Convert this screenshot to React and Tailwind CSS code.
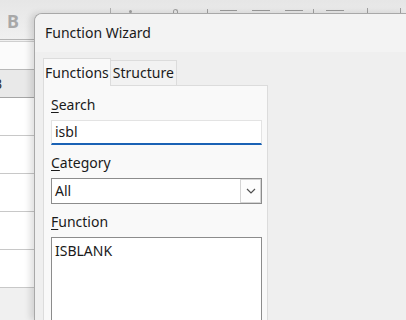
import React from "react";

const font = { fontFamily: '"Noto Sans", "Open Sans", sans-serif' };

function Toolbar() {
  return (
    <div className="h-[40px] bg-gradient-to-b from-[#e6e6e6] to-[#f0f0f0] border-b border-[#b4b4b4] flex items-start pt-[8px] pl-[7px]">
      <span className="mt-[2px] text-[18px] font-bold text-[#a8a8a8] leading-[22px]">B</span>
      {/* icon fragments peeking above the dialog */}
      <span className="ml-[91px] w-px h-[5px] bg-[#b0b0b0]" />
      <span className="ml-[18px] mt-[2px] w-[3px] h-[3px] rounded-full bg-[#a0a0a0]" />
      <span className="ml-[41px] mt-[1px] w-[5px] h-[4px] rounded-t-full border border-b-0 border-[#a0a0a0]" />
      <span className="ml-[29px] mt-[1px] w-px h-[4px] bg-[#a0a0a0]" />
      <span className="ml-[12px] mt-[2px] w-[17px] h-px bg-[#9a9a9a]" />
      <span className="ml-[15px] mt-[2px] w-[18px] h-px bg-[#9a9a9a]" />
      <span className="ml-[15px] mt-[2px] w-[18px] h-px bg-[#9a9a9a]" />
      <span className="ml-[10px] mt-[1px] w-px h-[4px] bg-[#a0a0a0]" />
      <span className="ml-[12px] mt-[2px] w-[18px] h-px bg-[#9a9a9a]" />
      <span className="ml-[23px] w-px h-[5px] bg-[#a0a0a0]" />
      <span className="ml-[32px] w-px h-[5px] bg-[#a0a0a0]" />
    </div>
  );
}

function Sheet() {
  const rows = [0, 1, 2, 3, 4];
  return (
    <div className="w-[34px]">
      <div className="h-[2px] border-b border-[#cfcfcf]" />
      <div className="h-[28px] bg-[#fbfbfb] border-b border-[#b8b8b8]" />
      <div className="h-[28px] bg-[#e9e9e9] border-b border-[#a6a6a6] flex items-center overflow-hidden">
        <span className="ml-[-7px] text-[14px] text-[#333]">B</span>
      </div>
      {rows.map((r) => (
        <div key={r} className="h-[38px] bg-white border-b border-[#c8c8c8]" />
      ))}
    </div>
  );
}

function Label({ first, rest, className = "" }) {
  return (
    <div className={"h-[20px] leading-[20px] text-[14px] text-[#1a1a1a] " + className}>
      <span className="underline underline-offset-[2px] decoration-[1px]">{first}</span>
      {rest}
    </div>
  );
}

function Dialog() {
  return (
    <div className="absolute left-[34px] top-[13px] right-0 bottom-0 overflow-hidden rounded-tl-[8px] border-l border-t border-[#a8a8a8] bg-[#efefef] shadow-[-4px_0_6px_rgba(0,0,0,0.12)]">
      <div className="h-[38px] bg-[#f3f3f3] pl-[10px] pt-[9px] text-[14px] leading-[20px] text-[#1a1a1a]">
        Function Wizard
      </div>
      <div className="pl-[8px] pt-[6px]">
        <div className="flex items-end h-[27px]">
          <div className="relative z-10 h-[28px] -mb-px bg-[#f9f9f9] border border-b-0 border-[#dcdcdc] px-[1px] pt-[4px] text-[14px] leading-[20px] text-[#1a1a1a]">
            Functions
          </div>
          <div className="h-[25px] bg-[#f2f2f2] border-t border-r border-[#dcdcdc] px-[2px] pt-[2px] text-[14px] leading-[20px] text-[#1a1a1a]">
            Structure
          </div>
        </div>
        <div className="w-[225px] h-[240px] bg-[#f9f9f9] border border-[#dcdcdc] pl-[7px] pt-[9px]">
          <Label first="S" rest="earch" className="mb-[5px]" />
          <div className="w-[211px] h-[25px] bg-white border border-[#e3e3e3] border-b-2 border-b-[#1a62b5] pl-[3px] text-[14px] leading-[21px] text-[#1a1a1a]">
            isbl
          </div>
          <Label first="C" rest="ategory" className="mt-[8px] mb-[5px]" />
          <div className="w-[211px] h-[26px] bg-white border border-[#8c8c8c] flex items-stretch">
            <div className="flex-1 pl-[3px] text-[14px] leading-[23px] text-[#1a1a1a]">All</div>
            <div className="w-[21px] bg-[#fdfdfd] border border-[#d4d4d4] flex items-center justify-center">
              <svg width="10" height="6" viewBox="0 0 10 6" fill="none">
                <path d="M1 1L5 5L9 1" stroke="#505050" strokeWidth="1.2" />
              </svg>
            </div>
          </div>
          <Label first="F" rest="unction" className="mt-[8px] mb-[5px]" />
          <div className="w-[211px] h-[100px] bg-white border border-[#8c8c8c] pl-[3px] pt-[3px] text-[14px] leading-[20px] text-[#1a1a1a]">
            ISBLANK
          </div>
        </div>
      </div>
    </div>
  );
}

export default function App() {
  return (
    <div className="relative w-[406px] h-[320px] overflow-hidden bg-[#f0f0f0]" style={font}>
      <Toolbar />
      <Sheet />
      <Dialog />
    </div>
  );
}
